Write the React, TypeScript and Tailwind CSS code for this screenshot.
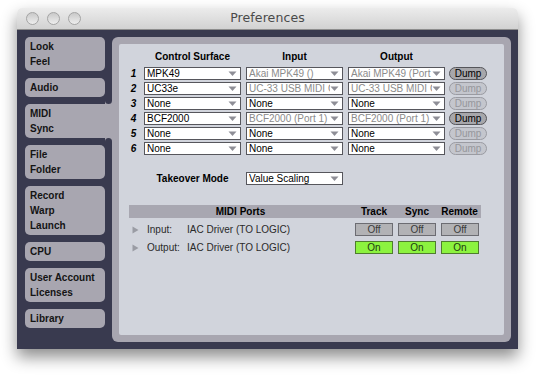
import React from "react";

const font = { fontFamily: '"Liberation Sans", Arial, sans-serif' };

function Arrow() {
  return (
    <svg width="9" height="6" viewBox="0 0 9 6" className="shrink-0">
      <path d="M0.5 0.5 L8.5 0.5 L4.5 5 Z" fill="#8e8e96" />
    </svg>
  );
}

function Drop({ text, dim, w = "w-[97px]" }: { text: string; dim?: boolean; w?: string }) {
  return (
    <div
      className={`${w} h-[13px] bg-white border border-[#56565c] flex items-center pl-[2px] pr-[3px] overflow-hidden`}
    >
      <span
        className={`flex-1 whitespace-nowrap overflow-hidden text-[10px] leading-[11px] ${dim ? "text-[#8b8b8b]" : "text-black"}`}
      >
        {text}
      </span>
      <Arrow />
    </div>
  );
}

function Dump({ on }: { on?: boolean }) {
  return (
    <div
      className={`w-[38px] h-[13px] rounded-full border flex items-center justify-center text-[10px] leading-[11px] ${
        on ? "bg-[#a7a7ab] border-[#55555a] text-black" : "bg-[#c4c6cd] border-[#9a9ba2] text-[#96979c]"
      }`}
    >
      Dump
    </div>
  );
}

function Tab({ lines, active }: { lines: string[]; active?: boolean }) {
  if (active) {
    return (
      <div className="flex w-[87px]">
        <div className="w-[80px] bg-[#a8a6b0] rounded-l-[5px] py-[2px] pl-[5px] text-[10px] leading-[15px] font-bold text-[#141414]">
          {lines.map((l) => (
            <div key={l}>{l}</div>
          ))}
        </div>
        <div className="relative w-[7px] bg-[#a8a6b0]">
          <div className="absolute left-0 top-[-6px] w-[7px] h-[6px] bg-[#a8a6b0]">
            <div className="w-full h-full bg-[#393a4f] rounded-b-[5px]" />
          </div>
          <div className="absolute left-0 bottom-[-6px] w-[7px] h-[6px] bg-[#a8a6b0]">
            <div className="w-full h-full bg-[#393a4f] rounded-t-[5px]" />
          </div>
        </div>
      </div>
    );
  }
  return (
    <div className="w-[80px] bg-[#a8a6b0] rounded-[5px] py-[2px] pl-[5px] text-[10px] leading-[15px] font-bold text-[#141414]">
      {lines.map((l) => (
        <div key={l}>{l}</div>
      ))}
    </div>
  );
}

function Toggle({ on }: { on?: boolean }) {
  return (
    <div
      className={`w-[38px] h-[13px] border flex items-center justify-center text-[10px] leading-[11px] ${
        on ? "bg-[#8cf33f] border-[#4f7d2e] text-[#1d3a10]" : "bg-[#b2b2b5] border-[#6c6c72] text-[#3a3a3a]"
      }`}
    >
      {on ? "On" : "Off"}
    </div>
  );
}

const rows: { n: string; cs: string; inp: string; inDim: boolean; out: string; outDim: boolean; dump: boolean }[] = [
  { n: "1", cs: "MPK49", inp: "Akai MPK49 ()", inDim: true, out: "Akai MPK49 (Port 1)", outDim: true, dump: true },
  { n: "2", cs: "UC33e", inp: "UC-33 USB MIDI Controller", inDim: true, out: "UC-33 USB MIDI Controller", outDim: true, dump: false },
  { n: "3", cs: "None", inp: "None", inDim: false, out: "None", outDim: false, dump: false },
  { n: "4", cs: "BCF2000", inp: "BCF2000 (Port 1)", inDim: true, out: "BCF2000 (Port 1)", outDim: true, dump: true },
  { n: "5", cs: "None", inp: "None", inDim: false, out: "None", outDim: false, dump: false },
  { n: "6", cs: "None", inp: "None", inDim: false, out: "None", outDim: false, dump: false },
];

export default function App() {
  return (
    <div className="w-[537px] h-[375px] bg-white overflow-hidden pt-[8px] pl-[17px]" style={font}>
      <div className="w-[501px] rounded-t-[5px] shadow-[0_8px_16px_rgba(0,0,0,0.45)]">
        {/* Title bar */}
        <div className="relative h-[22px] rounded-t-[5px] bg-gradient-to-b from-[#ececec] to-[#d2d2d2] border-b border-[#8e8e8e] flex items-center justify-center">
          <div className="absolute left-[9px] top-[4px] flex gap-[8px]">
            {[0, 1, 2].map((i) => (
              <div
                key={i}
                className="w-[13px] h-[13px] rounded-full border border-[#a4a4a4] bg-gradient-to-b from-[#c9c9c9] to-[#eeeeee]"
              />
            ))}
          </div>
          <span className="text-[13px] text-[#4a4a4a] tracking-[0.1px]" style={{ fontFamily: '"DejaVu Sans", "Liberation Sans", sans-serif', fontSize: 12.5 }}>
            Preferences
          </span>
        </div>
        {/* Body */}
        <div className="h-[319px] bg-[#393a4f] flex pt-[7px] pl-[8px] pr-[7px] pb-[7px]">
          <div className="flex flex-col gap-[7px] w-[87px] shrink-0">
            <Tab lines={["Look", "Feel"]} />
            <Tab lines={["Audio"]} />
            <Tab lines={["MIDI", "Sync"]} active />
            <Tab lines={["File", "Folder"]} />
            <Tab lines={["Record", "Warp", "Launch"]} />
            <Tab lines={["CPU"]} />
            <Tab lines={["User Account", "Licenses"]} />
            <Tab lines={["Library"]} />
          </div>
          <div className="flex-1 bg-[#a8a6b0] rounded-[6px] p-[7px]">
            <div className="h-full bg-[#d1d4dc] rounded-[2px] pt-[5px] text-[10px] text-black">
              {/* headers */}
              <div className="flex h-[14px] items-center font-bold text-[10px]">
                <div className="w-[25px]" />
                <div className="w-[97px] text-center">Control Surface</div>
                <div className="w-[5px]" />
                <div className="w-[97px] text-center">Input</div>
                <div className="w-[5px]" />
                <div className="w-[97px] text-center">Output</div>
              </div>
              <div className="mt-[4px] flex flex-col gap-[2px]">
                {rows.map((r) => (
                  <div key={r.n} className="flex items-center h-[13px]">
                    <div className="w-[25px] text-center pl-[4px] font-bold italic text-[10px] leading-[11px]">{r.n}</div>
                    <Drop text={r.cs} />
                    <div className="w-[5px]" />
                    <Drop text={r.inp} dim={r.inDim} />
                    <div className="w-[5px]" />
                    <Drop text={r.out} dim={r.outDim} />
                    <div className="w-[4px]" />
                    <Dump on={r.dump} />
                  </div>
                ))}
              </div>
              {/* takeover */}
              <div className="mt-[17px] flex items-center h-[13px]">
                <div className="w-[25px]" />
                <div className="w-[97px] text-center font-bold">Takeover Mode</div>
                <div className="w-[5px]" />
                <Drop text="Value Scaling" />
              </div>
              {/* midi ports */}
              <div className="mt-[20px] ml-[10px] w-[352px] h-[13px] bg-[#a8a7b1] flex items-center font-bold">
                <div className="w-[223px] text-center">MIDI Ports</div>
                <div className="w-[44px] text-center">Track</div>
                <div className="w-[42px] text-center">Sync</div>
                <div className="w-[43px] text-center">Remote</div>
              </div>
              {[
                { label: "Input:", on: false },
                { label: "Output:", on: true },
              ].map((p) => (
                <div key={p.label} className="mt-[5px] ml-[10px] flex items-center h-[13px] text-[#2a2a2a]">
                  <svg width="7" height="8" viewBox="0 0 7 8" className="ml-[3px] mr-[8px]">
                    <path d="M0.5 0.5 L6.5 4 L0.5 7.5 Z" fill="#9a9ca4" />
                  </svg>
                  <div className="w-[40px]">{p.label}</div>
                  <div className="w-[168px]">IAC Driver (TO LOGIC)</div>
                  <div className="flex gap-[5px]">
                    <Toggle on={p.on} />
                    <Toggle on={p.on} />
                    <Toggle on={p.on} />
                  </div>
                </div>
              ))}
            </div>
          </div>
        </div>
      </div>
    </div>
  );
}
